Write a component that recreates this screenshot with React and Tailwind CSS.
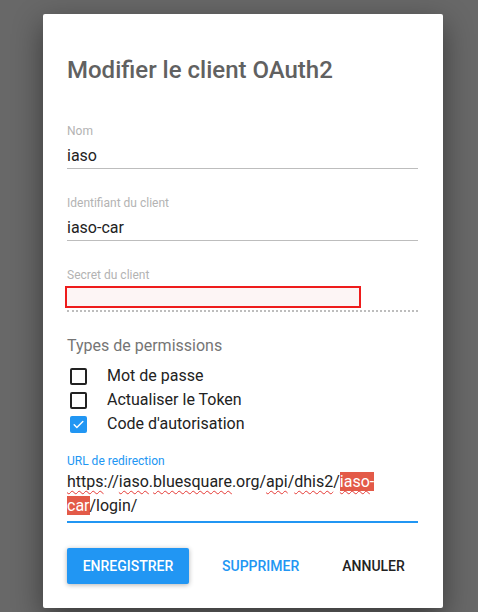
import React from "react";

const font = { fontFamily: "Roboto, 'Liberation Sans', sans-serif" };

function Field({ label, value }) {
	return (
		<div className="flex flex-col">
			<div className="h-4 text-[12px] leading-4 text-[#b3b3b3]">{label}</div>
			<div className="mt-[5px] h-[25px] border-b border-[#bdbdbd] text-[16px] leading-6 text-[#222]">
				{value}
			</div>
		</div>
	);
}

function Checkbox({ checked, label }) {
	return (
		<div className="flex h-6 items-center">
			<div className="flex w-[40px] justify-start pl-[3px]">
				{checked ? (
					<span className="flex h-[17px] w-[17px] items-center justify-center rounded-[2px] bg-[#2196f3]">
						<svg width="13" height="13" viewBox="0 0 24 24" fill="none">
							<path
								d="M4 12.5l5 5L20 6.5"
								stroke="white"
								strokeWidth="2.6"
								strokeLinecap="round"
								strokeLinejoin="round"
							/>
						</svg>
					</span>
				) : (
					<span className="h-[17px] w-[17px] rounded-[2px] border-2 border-[#222]" />
				)}
			</div>
			<span className="text-[16px] text-[#222]">{label}</span>
		</div>
	);
}

const Typo = ({ children }) => (
	<span className="underline decoration-wavy decoration-[#e53935] decoration-1 underline-offset-[3px]">
		{children}
	</span>
);

export default function App() {
	return (
		<div className="min-h-[612px] bg-[#686868] pt-[14px] pl-[43px]" style={font}>
			<div className="flex h-[594px] w-[400px] flex-col rounded-[2px] bg-white px-6 shadow-[0_10px_30px_rgba(0,0,0,0.45)]">
				<h2 className="pt-[40px] text-[24px] font-medium leading-8 text-[#616161]">
					Modifier le client OAuth2
				</h2>

				<div className="mt-[37px] flex w-[351px] flex-col gap-[26px]">
					<Field label="Nom" value="iaso" />
					<Field label="Identifiant du client" value="iaso-car" />
					<div className="flex flex-col">
						<div className="h-4 text-[12px] leading-4 text-[#b3b3b3]">Secret du client</div>
						<div className="mt-[5px] h-[24px] border-b-2 border-dotted border-[#bdbdbd]">
							<div className="-mt-[2px] -ml-[2px] h-[22px] w-[296px] border-2 border-[#ee1c1c] bg-[#fdf5f5]" />
						</div>
					</div>
				</div>

				<div className="mt-[22px] text-[16px] leading-6 text-[#757575]">Types de permissions</div>
				<div className="mt-[6px] flex flex-col">
					<Checkbox label="Mot de passe" />
					<Checkbox label="Actualiser le Token" />
					<Checkbox checked label="Code d'autorisation" />
				</div>

				<div className="mt-[17px] w-[351px]">
					<div className="h-4 text-[12px] leading-4 text-[#2196f3]">URL de redirection</div>
					<div className="mt-[1px] border-b-2 border-[#2196f3] pb-[3px] text-[16px] leading-6 text-[#222]">
						<div>
							<Typo>https</Typo>://<Typo>iaso</Typo>.<Typo>bluesquare</Typo>.org/<Typo>api</Typo>/
							<Typo>dhis2</Typo>/
							<span className="bg-[#e35a48] text-white">
								<Typo>iaso</Typo>-
							</span>
						</div>
						<div>
							<span className="bg-[#e35a48] text-white">car</span>/login/
						</div>
					</div>
				</div>

				<div className="mt-[25px] flex items-center">
					<button className="h-[36px] w-[122px] rounded-[2px] bg-[#2196f3] text-[14px] font-medium text-white shadow-[0_1px_5px_rgba(0,0,0,0.3)]">
						ENREGISTRER
					</button>
					<button className="ml-[25px] h-[36px] px-2 text-[14px] font-medium text-[#2196f3]">
						SUPPRIMER
					</button>
					<button className="ml-[27px] h-[36px] px-2 text-[14px] font-medium text-[#222]">
						ANNULER
					</button>
				</div>
			</div>
		</div>
	);
}
